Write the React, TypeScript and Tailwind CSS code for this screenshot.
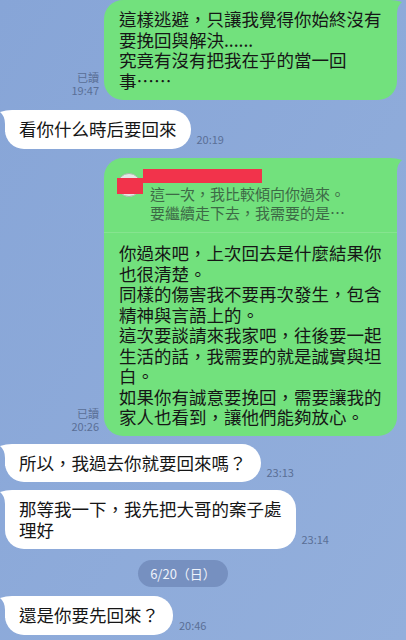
const green = 'bg-[#72e17d]';

function TailLeft() {
  return (
    <svg className="absolute -left-[5px] top-0 h-[22px] w-[24px]" viewBox="0 0 24 22">
      <path d="M0 2 Q6 0 12 0 L24 0 L24 22 L5 22 L5 14 Q5 6 0 2 Z" fill="#ffffff" />
    </svg>
  );
}

function TailRight() {
  return (
    <svg className="absolute -right-[5px] top-0 h-[22px] w-[24px]" viewBox="0 0 24 22">
      <path d="M24 2 Q18 0 12 0 L0 0 L0 22 L19 22 L19 14 Q19 6 24 2 Z" fill="#72e17d" />
    </svg>
  );
}

function Lines({ lines }: { lines: string[] }) {
  return (
    <>
      {lines.map((line, i) => (
        <div key={i} className="whitespace-nowrap">
          {line}
        </div>
      ))}
    </>
  );
}

function Time({ read, time }: { read?: boolean; time: string }) {
  return (
    <div className="mb-[3px] text-right text-[11px] leading-[13px] text-[#5a6f96]">
      {read && <div>已讀</div>}
      <div>{time}</div>
    </div>
  );
}

function Incoming({ lines, time, className = '' }: { lines: string[]; time: string; className?: string }) {
  return (
    <div className={`flex items-end gap-[6px] pl-[5px] ${className}`}>
      <div className="relative rounded-[19px] bg-white px-[14px] py-[9px] text-[17.5px] leading-[20.5px] text-[#161616]">
        <TailLeft />
        <div className="relative">
          <Lines lines={lines} />
        </div>
      </div>
      <Time time={time} />
    </div>
  );
}

function App() {
  const first = ['這樣逃避，只讓我覺得你始終沒有', '要挽回與解決......', '究竟有沒有把我在乎的當一回', '事……'];
  const quote = ['這一次，我比較傾向你過來。', '要繼續走下去，我需要的是…'];
  const reply = [
    '你過來吧，上次回去是什麼結果你',
    '也很清楚。',
    '同樣的傷害我不要再次發生，包含',
    '精神與言語上的。',
    '這次要談請來我家吧，往後要一起',
    '生活的話，我需要的就是誠實與坦',
    '白。',
    '如果你有誠意要挽回，需要讓我的',
    '家人也看到，讓他們能夠放心。',
  ];

  return (
    <div className="h-[640px] w-[406px] overflow-hidden bg-gradient-to-br from-[#87a5d7] to-[#93afdc] font-['Noto_Sans_CJK_TC',sans-serif]">
      <div className="flex flex-col">
        <div className="flex items-end justify-end gap-[5px] pr-[9px]">
          <Time read time="19:47" />
          <div className={`relative w-[293px] rounded-[19px] ${green} px-[15px] py-[9px] text-[17.5px] leading-[20.5px] text-[#161616]`}>
            <TailRight />
            <div className="relative">
              <Lines lines={first} />
            </div>
          </div>
        </div>

        <Incoming className="mt-[10px]" lines={['看你什么時后要回來']} time="20:19" />

        <div className="mt-[9px] flex items-end justify-end gap-[5px] pr-[9px]">
          <Time read time="20:26" />
          <div className={`relative w-[293px] rounded-[19px] ${green} text-[#161616]`}>
            <TailRight />
            <div className="relative flex px-[13px] pb-[10px] pt-[11px]">
              <div className="relative mt-[4px] h-[24px] w-[26px] shrink-0">
                <div className="h-[24px] w-[24px] rounded-full border border-[#a9b8a9] bg-[#e4e8e4]" />
                <div className="absolute left-0 top-[5px] h-[16px] w-[26px] bg-[#f2334b]" />
              </div>
              <div className="flex flex-col">
                <div className="h-[14px] w-[119px] bg-[#f2334b]" />
                <div className="pl-[7px] pt-[1.5px] text-[15px] leading-[19px] text-[#3d6a46]">
                  <Lines lines={quote} />
                </div>
              </div>
            </div>
            <div className="border-t border-[#86e48f] px-[15px] pb-[8px] pt-[10px] text-[17.5px] leading-[20.5px]">
              <Lines lines={reply} />
            </div>
          </div>
        </div>

        <Incoming className="mt-[8px]" lines={['所以，我過去你就要回來嗎？']} time="23:13" />
        <Incoming className="mt-[8px]" lines={['那等我一下，我先把大哥的案子處', '理好']} time="23:14" />

        <div className="ml-[138px] mt-[11px] flex h-[27px] w-[90px] items-center justify-center rounded-full bg-[#7690c0] text-[13px] text-[#eef2fa]">
          6/20（日）
        </div>

        <Incoming className="mt-[9px]" lines={['還是你要先回來？']} time="20:46" />
      </div>
    </div>
  );
}

export default App;
